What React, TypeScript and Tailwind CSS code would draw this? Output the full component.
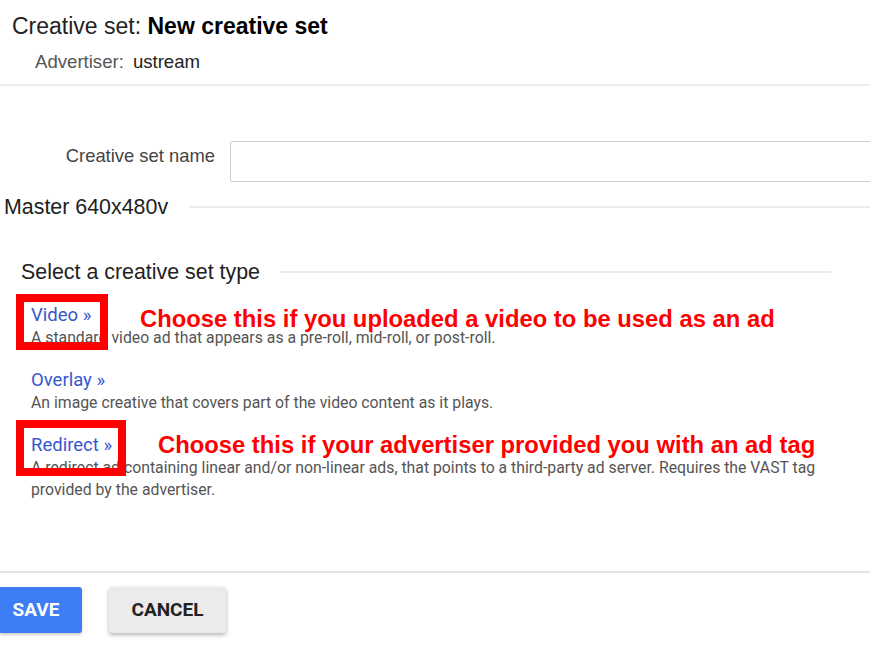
import React from "react";

interface CreativeType {
  label: string;
  description: string;
  note?: { text: string; left: string; boxWidth: string; boxTop: string; textTop: string };
}

const types: CreativeType[] = [
  {
    label: "Video",
    description:
      "A standard video ad that appears as a pre-roll, mid-roll, or post-roll.",
    note: {
      text: "Choose this if you uploaded a video to be used as an ad",
      left: "left-[109px]",
      boxWidth: "w-[92px]",
      boxTop: "-top-[9px]",
      textTop: "top-[1px]",
    },
  },
  {
    label: "Overlay",
    description:
      "An image creative that covers part of the video content as it plays.",
  },
  {
    label: "Redirect",
    description:
      "A redirect ad containing linear and/or non-linear ads, that points to a third-party ad server. Requires the VAST tag provided by the advertiser.",
    note: {
      text: "Choose this if your advertiser provided you with an ad tag",
      left: "left-[127px]",
      boxWidth: "w-[110px]",
      boxTop: "-top-[13px]",
      textTop: "-top-[3px]",
    },
  },
];

const sans = { fontFamily: '"Liberation Sans", Arial, sans-serif' };

function TypeOption({ item }: { item: CreativeType }) {
  return (
    <div className="relative">
      <a className="block text-[18.5px] leading-[24px] text-[#3558d0] cursor-pointer">
        {item.label} »
      </a>
      <p className="w-[800px] text-[15.8px] leading-[22px] text-[#555]">
        {item.description}
      </p>
      {item.note && (
        <>
          <div
            className={`absolute -left-[15px] ${item.note.boxTop} ${item.note.boxWidth} h-[56px] border-[8px] border-[#ff0000] pointer-events-none`}
          />
          <span
            className={`absolute ${item.note.left} ${item.note.textTop} whitespace-nowrap text-[23.8px] leading-[30px] font-bold text-[#ff0000]`}
            style={sans}
          >
            {item.note.text}
          </span>
        </>
      )}
    </div>
  );
}

function SectionTitle({ children, lineClass }: { children: React.ReactNode; lineClass: string }) {
  return (
    <div className="flex items-center">
      <span className="text-[21.4px] leading-[24px] text-[#222] whitespace-nowrap" style={sans}>
        {children}
      </span>
      <div className={`h-[2px] bg-[#ececec] ${lineClass}`} />
    </div>
  );
}

export default function App() {
  return (
    <div
      className="w-[870px] h-[649px] bg-white overflow-hidden flex flex-col"
      style={{ fontFamily: 'Roboto, "Liberation Sans", Arial, sans-serif' }}
    >
      <header className="h-[86px] border-b-2 border-[#eeeeee] shrink-0" style={sans}>
        <h1 className="mt-[14px] pl-[12px] text-[23px] leading-[24px] text-[#222]">
          Creative set: <span className="font-bold text-black">New creative set</span>
        </h1>
        <div className="mt-[14px] pl-[35px] flex gap-[9px] text-[18.6px] leading-[20px]">
          <span className="text-[#555]">Advertiser:</span>
          <span className="text-[#222]">ustream</span>
        </div>
      </header>

      <div className="mt-[55px] flex items-start">
        <label
          className="w-[215px] pt-[3px] text-right text-[18.4px] leading-[24px] text-[#444]"
          style={sans}
        >
          Creative set name
        </label>
        <input
          type="text"
          className="ml-[15px] h-[41px] flex-1 border border-[#cfcfcf] rounded-[2px] -mr-[4px] outline-none"
        />
      </div>

      <div className="mt-[13px] pl-[4px]">
        <SectionTitle lineClass="ml-[21px] flex-1">Master 640x480v</SectionTitle>
      </div>

      <div className="mt-[41px] pl-[21px]">
        <SectionTitle lineClass="ml-[20px] w-[551px]">Select a creative set type</SectionTitle>
      </div>

      <div className="mt-[19px] pl-[31px] flex flex-col gap-[19px]">
        {types.map((t) => (
          <TypeOption key={t.label} item={t} />
        ))}
      </div>

      <div className="mt-[70px] border-t-2 border-[#e6e6e6]" />

      <div className="mt-[14px] flex gap-[27px]">
        <button className="w-[82px] h-[46px] pr-[10px] rounded-r-[3px] bg-[#3d7ef7] text-white text-[19px] font-bold shadow-[0_2px_3px_rgba(0,0,0,0.2)]">
          SAVE
        </button>
        <button className="w-[117px] h-[46px] rounded-[3px] bg-[#ebebeb] text-[#222] text-[19px] font-bold shadow-[0_2px_4px_rgba(0,0,0,0.3)]">
          CANCEL
        </button>
      </div>
    </div>
  );
}
